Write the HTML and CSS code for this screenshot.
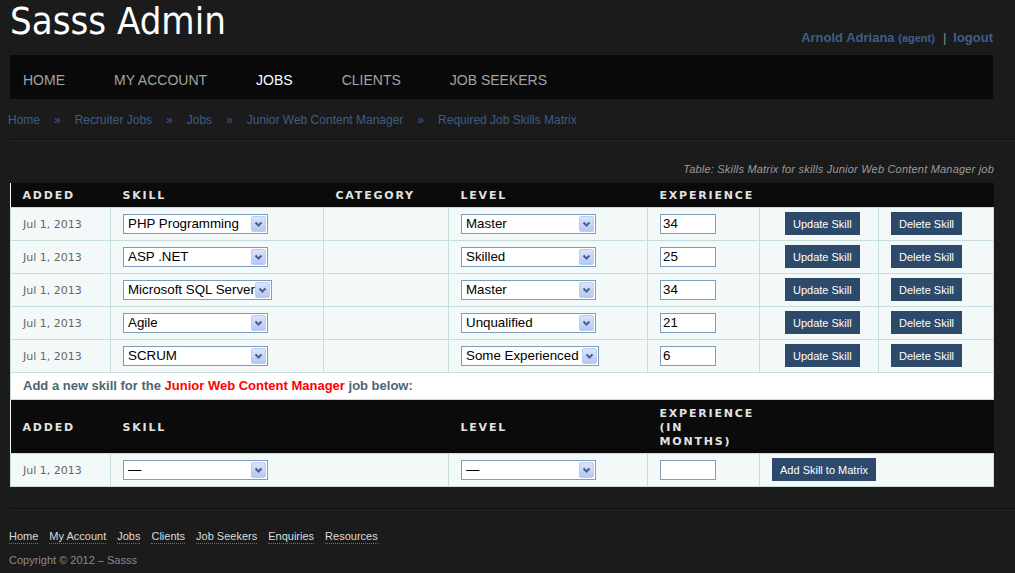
FILE: index.html
```html
<!DOCTYPE html>
<html lang="en">
<head>
<meta charset="utf-8">
<title>Sasss Admin</title>
<link rel="stylesheet" href="styles.css">
</head>
<body>
<div class="page">
  <header class="top">
    <h1 class="brand">Sasss Admin</h1>
    <div class="user"><a class="uname" href="#">Arnold Adriana</a> <span class="role">(agent)</span><span class="sep">|</span><a class="logout" href="#">logout</a></div>
  </header>

  <nav class="nav">
    <a href="#">HOME</a>
    <a href="#">MY ACCOUNT</a>
    <a href="#" class="active">JOBS</a>
    <a href="#">CLIENTS</a>
    <a href="#">JOB SEEKERS</a>
  </nav>

  <div class="crumbs">
    <a href="#">Home</a><span class="bsep">»</span><a href="#">Recruiter Jobs</a><span class="bsep">»</span><a href="#">Jobs</a><span class="bsep">»</span><a href="#">Junior Web Content Manager</a><span class="bsep">»</span><a href="#">Required Job Skills Matrix</a>
  </div>
  <div class="rule"></div>

  <table class="matrix">
    <caption>Table: Skills Matrix for skills Junior Web Content Manager job</caption>
    <colgroup>
      <col class="c-added"><col class="c-skill"><col class="c-cat"><col class="c-level"><col class="c-exp"><col class="c-upd"><col class="c-del">
    </colgroup>
    <thead>
      <tr class="head">
        <th>ADDED</th><th>SKILL</th><th>CATEGORY</th><th>LEVEL</th><th>EXPERIENCE</th><th></th><th></th>
      </tr>
    </thead>
    <tbody>
      <tr>
        <td class="date">Jul 1, 2013</td>
        <td><span class="sel"><select class="w145"><option>PHP Programming</option><option>ASP .NET</option></select><svg class="arr" viewBox="0 0 15 16"><defs><linearGradient id="g1" x1="0" y1="0" x2="0" y2="1"><stop offset="0" stop-color="#dae5fd"/><stop offset="1" stop-color="#b3c7f5"/></linearGradient></defs><rect x="0.5" y="0.5" width="14" height="15" rx="1.5" fill="url(#g1)" stroke="#bccdf3"/><path d="M4.5 6.5 L7.5 9.5 L10.5 6.5" fill="none" stroke="#4d6185" stroke-width="2"/></svg></span></td>
        <td></td>
        <td><span class="sel"><select class="w135"><option>Master</option><option>Skilled</option></select><svg class="arr" viewBox="0 0 15 16"><rect x="0.5" y="0.5" width="14" height="15" rx="1.5" fill="url(#g1)" stroke="#bccdf3"/><path d="M4.5 6.5 L7.5 9.5 L10.5 6.5" fill="none" stroke="#4d6185" stroke-width="2"/></svg></span></td>
        <td><input class="num" type="text" value="34"></td>
        <td class="upd"><button class="btn">Update Skill</button></td>
        <td><button class="btn">Delete Skill</button></td>
      </tr>
      <tr>
        <td class="date">Jul 1, 2013</td>
        <td><span class="sel"><select class="w145"><option>ASP .NET</option></select><svg class="arr" viewBox="0 0 15 16"><rect x="0.5" y="0.5" width="14" height="15" rx="1.5" fill="url(#g1)" stroke="#bccdf3"/><path d="M4.5 6.5 L7.5 9.5 L10.5 6.5" fill="none" stroke="#4d6185" stroke-width="2"/></svg></span></td>
        <td></td>
        <td><span class="sel"><select class="w135"><option>Skilled</option></select><svg class="arr" viewBox="0 0 15 16"><rect x="0.5" y="0.5" width="14" height="15" rx="1.5" fill="url(#g1)" stroke="#bccdf3"/><path d="M4.5 6.5 L7.5 9.5 L10.5 6.5" fill="none" stroke="#4d6185" stroke-width="2"/></svg></span></td>
        <td><input class="num" type="text" value="25"></td>
        <td class="upd"><button class="btn">Update Skill</button></td>
        <td><button class="btn">Delete Skill</button></td>
      </tr>
      <tr>
        <td class="date">Jul 1, 2013</td>
        <td><span class="sel"><select class="w149 tight"><option>Microsoft SQL Server</option></select><svg class="arr" viewBox="0 0 15 16"><rect x="0.5" y="0.5" width="14" height="15" rx="1.5" fill="url(#g1)" stroke="#bccdf3"/><path d="M4.5 6.5 L7.5 9.5 L10.5 6.5" fill="none" stroke="#4d6185" stroke-width="2"/></svg></span></td>
        <td></td>
        <td><span class="sel"><select class="w135"><option>Master</option></select><svg class="arr" viewBox="0 0 15 16"><rect x="0.5" y="0.5" width="14" height="15" rx="1.5" fill="url(#g1)" stroke="#bccdf3"/><path d="M4.5 6.5 L7.5 9.5 L10.5 6.5" fill="none" stroke="#4d6185" stroke-width="2"/></svg></span></td>
        <td><input class="num" type="text" value="34"></td>
        <td class="upd"><button class="btn">Update Skill</button></td>
        <td><button class="btn">Delete Skill</button></td>
      </tr>
      <tr>
        <td class="date">Jul 1, 2013</td>
        <td><span class="sel"><select class="w145"><option>Agile</option></select><svg class="arr" viewBox="0 0 15 16"><rect x="0.5" y="0.5" width="14" height="15" rx="1.5" fill="url(#g1)" stroke="#bccdf3"/><path d="M4.5 6.5 L7.5 9.5 L10.5 6.5" fill="none" stroke="#4d6185" stroke-width="2"/></svg></span></td>
        <td></td>
        <td><span class="sel"><select class="w135"><option>Unqualified</option></select><svg class="arr" viewBox="0 0 15 16"><rect x="0.5" y="0.5" width="14" height="15" rx="1.5" fill="url(#g1)" stroke="#bccdf3"/><path d="M4.5 6.5 L7.5 9.5 L10.5 6.5" fill="none" stroke="#4d6185" stroke-width="2"/></svg></span></td>
        <td><input class="num" type="text" value="21"></td>
        <td class="upd"><button class="btn">Update Skill</button></td>
        <td><button class="btn">Delete Skill</button></td>
      </tr>
      <tr>
        <td class="date">Jul 1, 2013</td>
        <td><span class="sel"><select class="w145"><option>SCRUM</option></select><svg class="arr" viewBox="0 0 15 16"><rect x="0.5" y="0.5" width="14" height="15" rx="1.5" fill="url(#g1)" stroke="#bccdf3"/><path d="M4.5 6.5 L7.5 9.5 L10.5 6.5" fill="none" stroke="#4d6185" stroke-width="2"/></svg></span></td>
        <td></td>
        <td><span class="sel"><select class="w138 tight"><option>Some Experienced</option></select><svg class="arr" viewBox="0 0 15 16"><rect x="0.5" y="0.5" width="14" height="15" rx="1.5" fill="url(#g1)" stroke="#bccdf3"/><path d="M4.5 6.5 L7.5 9.5 L10.5 6.5" fill="none" stroke="#4d6185" stroke-width="2"/></svg></span></td>
        <td><input class="num" type="text" value="6"></td>
        <td class="upd"><button class="btn">Update Skill</button></td>
        <td><button class="btn">Delete Skill</button></td>
      </tr>
      <tr class="note">
        <td colspan="7">Add a new skill for the <span class="job">Junior Web Content Manager</span> job below:</td>
      </tr>
      <tr class="head head2">
        <th>ADDED</th><th colspan="2">SKILL</th><th>LEVEL</th><th>EXPERIENCE (IN MONTHS)</th><th colspan="2"></th>
      </tr>
      <tr>
        <td class="date">Jul 1, 2013</td>
        <td colspan="2"><span class="sel"><select class="w145"><option>—</option></select><svg class="arr" viewBox="0 0 15 16"><rect x="0.5" y="0.5" width="14" height="15" rx="1.5" fill="url(#g1)" stroke="#bccdf3"/><path d="M4.5 6.5 L7.5 9.5 L10.5 6.5" fill="none" stroke="#4d6185" stroke-width="2"/></svg></span></td>
        <td><span class="sel"><select class="w135"><option>—</option></select><svg class="arr" viewBox="0 0 15 16"><rect x="0.5" y="0.5" width="14" height="15" rx="1.5" fill="url(#g1)" stroke="#bccdf3"/><path d="M4.5 6.5 L7.5 9.5 L10.5 6.5" fill="none" stroke="#4d6185" stroke-width="2"/></svg></span></td>
        <td><input class="num" type="text" value=""></td>
        <td colspan="2"><button class="btn">Add Skill to Matrix</button></td>
      </tr>
    </tbody>
  </table>

  <div class="rule foot-rule"></div>
  <footer class="foot">
    <div class="foot-nav">
      <a href="#">Home</a><a href="#">My Account</a><a href="#">Jobs</a><a href="#">Clients</a><a href="#">Job Seekers</a><a href="#">Enquiries</a><a href="#">Resources</a>
    </div>
    <div class="copy">Copyright © 2012 – Sasss</div>
  </footer>
</div>
</body>
</html>
```
FILE: styles.css
```css
* { box-sizing: border-box; }
html, body { margin: 0; padding: 0; }
body {
  background: #1b1b1b;
  font-family: "Liberation Sans", Arial, sans-serif;
  color: #ccc;
}
a { text-decoration: none; }

.page { padding: 0 22px 0 10px; }

/* header */
.top {
  display: flex;
  justify-content: space-between;
  align-items: flex-start;
  height: 55px;
}
.brand {
  margin: 1px 0 0;
  font-family: "DejaVu Sans Condensed", "DejaVu Sans", sans-serif;
  font-stretch: condensed;
  font-weight: normal;
  font-size: 38px;
  line-height: 40px;
  color: #fff;
}
.user {
  margin-top: 30px;
  font-size: 13px;
  line-height: 16px;
  font-weight: bold;
  color: #3e5f8a;
}
.user a { color: #3e5f8a; }
.user .role { font-size: 11px; }
.user .sep { color: #8a8a8a; font-weight: normal; margin: 0 7px 0 8px; }

/* nav */
.nav {
  display: flex;
  align-items: center;
  gap: 49px;
  height: 44px;
  padding-left: 13px;
  background: #090909;
}
.nav a {
  font-size: 14px;
  line-height: 16px;
  margin-top: 6px;
  color: #a2a2a2;
}
.nav a.active { color: #fff; }

/* breadcrumb */
.crumbs {
  height: 40px;
  padding-top: 13px;
  margin-left: -2px;
  font-size: 12px;
  line-height: 16px;
}
.crumbs a { color: #3c5d8a; }
.crumbs .bsep { color: #3c5d8a; margin: 0 14px; }

.rule {
  height: 2px;
  margin-right: -22px;
  border-top: 1px solid #0c0c0c;
  border-bottom: 1px solid #262626;
}

/* table */
.matrix {
  width: 983px;
  border-collapse: collapse;
  table-layout: fixed;
  background: #f3f9f9;
}
.matrix caption {
  caption-side: top;
  text-align: right;
  font-style: italic;
  font-size: 11px;
  line-height: 14px;
  letter-spacing: 0.2px;
  color: #9a9a9a;
  padding: 21px 0 7px;
}
.c-added { width: 100px; }
.c-skill { width: 213px; }
.c-cat { width: 125px; }
.c-level { width: 199px; }
.c-exp { width: 112px; }
.c-upd { width: 119px; }
.c-del { width: 115px; }

.matrix th {
  background: #0b0b0b;
  color: #e2e2e2;
  font: bold 11px/14px "DejaVu Sans", sans-serif;
  letter-spacing: 1.8px;
  text-align: left;
  padding: 2px 12px 0;
  height: 24px;
  vertical-align: middle;
}
.matrix .head2 th { height: 54px; padding-top: 4px; }

.matrix td {
  border: 1px solid #c6dedb;
  height: 33px;
  padding: 0 12px;
  vertical-align: middle;
  line-height: 20px;
}
.matrix td.date {
  font: 11px/20px "DejaVu Sans", sans-serif;
  color: #666;
  padding-top: 2px;
}
.matrix td.upd { padding-left: 25px; }

.matrix .note td {
  background: #fff;
  height: 27px;
  font-size: 13px;
  font-weight: bold;
  color: #4d6671;
  padding-top: 1px;
}
.matrix .note .job { color: #ff0000; }

/* form controls */
.sel {
  position: relative;
  display: inline-block;
  vertical-align: middle;
}
.sel select {
  -webkit-appearance: none;
  appearance: none;
  display: block;
  height: 20px;
  margin: 0;
  border: 1px solid #7f9db9;
  border-radius: 0;
  background: #fff;
  color: #000;
  font: 13.33px "Liberation Sans", Arial, sans-serif;
  padding: 0 18px 0 4px;
  outline: none;
}
.sel select.tight { padding-right: 14px; }
.sel .arr {
  position: absolute;
  right: 2px;
  top: 2px;
  width: 15px;
  height: 16px;
  pointer-events: none;
}
.w145 { width: 145px; }
.w149 { width: 149px; }
.w135 { width: 135px; }
.w138 { width: 138px; }

.num {
  display: inline-block;
  vertical-align: middle;
  width: 56px;
  height: 20px;
  margin: 0;
  border: 1px solid #7f9db9;
  border-radius: 0;
  background: #fff;
  font: 13.33px "Liberation Sans", Arial, sans-serif;
  color: #000;
  padding: 0 2px;
}

.btn {
  display: inline-block;
  vertical-align: middle;
  height: 23px;
  margin: 0;
  padding: 0 8px;
  border: none;
  border-radius: 0;
  background: #2e4a6b;
  color: #fff;
  font: 11px "Liberation Sans", Arial, sans-serif;
}

/* footer */
.foot-rule { margin-top: 21px; }
.foot { margin-left: -1px; }
.foot-nav {
  display: flex;
  gap: 11px;
  margin-top: 19px;
  font-size: 11px;
  line-height: 14px;
}
.foot-nav a {
  color: #dcdcdc;
  border-bottom: 1px dotted #6f6f6f;
}
.copy {
  margin-top: 9px;
  font-size: 11px;
  line-height: 14px;
  color: #8a8a8a;
}
```
